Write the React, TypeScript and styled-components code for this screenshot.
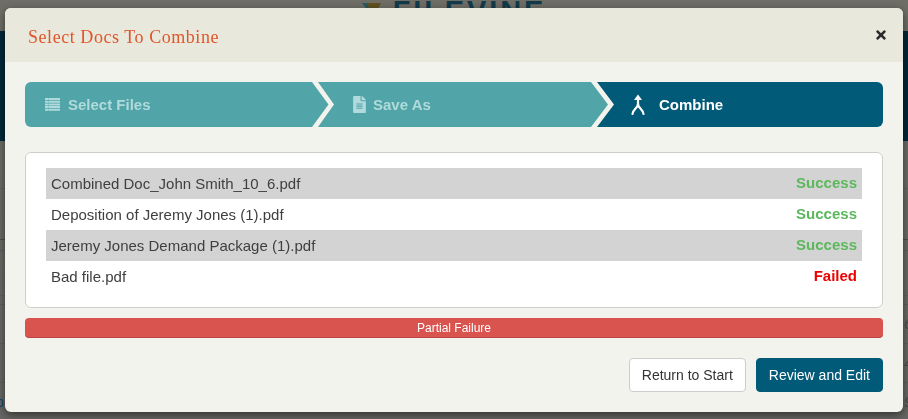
import React from "react";
import styled, { createGlobalStyle } from "styled-components";
import { FaFileAlt, FaTimes } from "react-icons/fa";

const GlobalStyle = createGlobalStyle`
  html, body {
    margin: 0;
    height: 100%;
    overflow: hidden;
    font-family: "Liberation Sans", Arial, sans-serif;
  }
`;

/* dimmed page behind the dialog */
const Page = styled.div`
  height: 419px;
  overflow: hidden;
  background: linear-gradient(#6e6e68, #666664);
`;

const TopBar = styled.div`
  height: 31px;
  overflow: hidden;
  display: flex;
  justify-content: center;
  gap: 12px;
  background: #6e6e67;
`;

const LogoMark = styled.svg`
  width: 19px;
  height: 20px;
  margin-top: 3px;
`;

const LogoText = styled.span`
  font-size: 29px;
  line-height: 29px;
  margin-top: -3px;
  font-weight: 700;
  letter-spacing: 2.9px;
  color: #123a4b;
`;

const Band = styled.div`
  height: 110px;
  background: #00283a;
`;

const BackRow = styled.div<{ $height: number; $line?: string }>`
  height: ${p => p.$height}px;
  box-sizing: border-box;
  border-bottom: 1px solid ${p => p.$line || "#5e5e5b"};
  display: flex;
  justify-content: space-between;
  align-items: center;
  font-size: 14px;
`;

const BackLeft = styled.span`
  color: #0d4a6c;
  margin-left: -4px;
`;

const BackRight = styled.span`
  color: #4a4a48;
  font-style: italic;
  margin-right: -4px;
`;

const Dialog = styled.div`
  position: fixed;
  left: 5px;
  top: 8px;
  width: 898px;
  height: 404px;
  box-sizing: border-box;
  background: #f2f3ed;
  border-radius: 6px;
  overflow: hidden;
  box-shadow: 0 3px 9px rgba(0, 0, 0, 0.5);
`;

const DialogHeader = styled.div`
  height: 54px;
  box-sizing: border-box;
  padding: 0 15px 0 23px;
  display: flex;
  align-items: center;
  justify-content: space-between;
  background: #e9e8dc;
`;

const Title = styled.h4`
  margin: 5px 0 0;
  font-family: "Liberation Serif", serif;
  font-weight: 400;
  font-size: 18px;
  letter-spacing: 0.55px;
  color: #e0562b;
`;

const Close = styled.button`
  border: 0;
  padding: 0;
  margin-top: -1px;
  background: none;
  display: flex;
  color: #2b2b2b;
  font-size: 14px;
`;

const DialogBody = styled.div`
  padding: 20px 20px 20px;
`;

const Steps = styled.div`
  display: flex;
  height: 45px;
  margin-bottom: 25px;
`;

const Step = styled.div<{ $width: number; $pad: number; $shape: string; $active?: boolean }>`
  width: ${p => p.$width}px;
  flex: none;
  box-sizing: border-box;
  padding-left: ${p => p.$pad}px;
  display: flex;
  align-items: center;
  font-size: 15px;
  font-weight: 700;
  background: ${p => (p.$active ? "#015a78" : "#51a4a7")};
  color: ${p => (p.$active ? "#fff" : "#b0dadb")};
  clip-path: ${p => p.$shape};
  & + & {
    margin-left: -11px;
  }
  svg {
    flex: none;
  }
`;

const StepLabel = styled.span<{ $gap: number }>`
  margin-left: ${p => p.$gap}px;
`;

const Results = styled.div`
  box-sizing: border-box;
  height: 156px;
  padding: 15px 20px;
  background: #fff;
  border: 1px solid #cfcfca;
  border-radius: 6px;
`;

const ResultRow = styled.div`
  height: 31px;
  padding: 0 5px;
  display: flex;
  align-items: center;
  justify-content: space-between;
  font-size: 15px;
  color: #3f3f3f;
  &:nth-child(odd) {
    background: #d3d3d3;
  }
`;

const Status = styled.span<{ $failed?: boolean }>`
  font-weight: 700;
  margin-top: -2px;
  color: ${p => (p.$failed ? "#f00000" : "#5cb85c")};
`;

const Progress = styled.div`
  height: 20px;
  margin-top: 10px;
  border-radius: 4px;
  background: #d9534f;
  box-shadow: inset 0 -1px 0 rgba(0, 0, 0, 0.15);
  color: #fff;
  font-size: 12px;
  line-height: 20px;
  text-align: center;
`;

const Footer = styled.div`
  display: flex;
  justify-content: flex-end;
  gap: 10px;
  margin-top: 20px;
`;

const Button = styled.button<{ $primary?: boolean }>`
  height: 34px;
  padding: 0 12px;
  font-family: inherit;
  font-size: 14px;
  border-radius: 4px;
  border: 1px solid ${p => (p.$primary ? "#015a78" : "#ccc")};
  background: ${p => (p.$primary ? "#015a78" : "#fff")};
  color: ${p => (p.$primary ? "#fff" : "#333")};
`;

const files = [
  { name: "Combined Doc_John Smith_10_6.pdf", status: "Success" },
  { name: "Deposition of Jeremy Jones (1).pdf", status: "Success" },
  { name: "Jeremy Jones Demand Package (1).pdf", status: "Success" },
  { name: "Bad file.pdf", status: "Failed" }
];

const backRows = [
  { height: 48, line: "#626260" },
  { height: 51, line: "#4f4f4c" },
  { height: 11 },
  { height: 45, line: "#626260" },
  { height: 9, left: "", right: "" },
  { height: 39, left: "f", right: "6" },
  { height: 39, left: "f", right: "4" },
  { height: 39, left: "p", right: "9" }
];

const ListIcon = () => (
  <svg width="15" height="13" viewBox="0 0 15 13" fill="currentColor">
    <path d="M0 0h15v2H0zM0 2.7h15v2H0zM0 5.4h15v2H0zM0 8.1h15v2H0zM0 10.8h15v2H0z" />
    <path d="M3.2 0h.6v13h-.6z" fill="#51a4a7" opacity="0.5" />
  </svg>
);

const MergeIcon = () => (
  <svg width="14" height="22" viewBox="0 0 14 22" fill="none" stroke="#fff" strokeWidth="2.2">
    <path d="M7 3v8" />
    <path d="M7 0.5 L3 6 H11 Z" fill="#fff" stroke="none" />
    <path d="M7 10c0 4-5 5-5.5 10" strokeLinecap="round" />
    <path d="M7 10c0 4 5 5 5.5 10" strokeLinecap="round" />
  </svg>
);

export default function App() {
  return (
    <>
      <GlobalStyle />
      <Page>
        <TopBar>
          <LogoMark viewBox="0 0 19 20">
            <path d="M0 0h6l4 14z" fill="#2c5a5c" />
            <path d="M5 0h14l-8 16z" fill="#5f5120" />
          </LogoMark>
          <LogoText>FILEVINE</LogoText>
        </TopBar>
        <Band />
        {backRows.map((row, i) => (
          <BackRow key={i} $height={row.height} $line={row.line}>
            <BackLeft>{row.left}</BackLeft>
            <BackRight>{row.right}</BackRight>
          </BackRow>
        ))}
      </Page>
      <Dialog>
        <DialogHeader>
          <Title>Select Docs To Combine</Title>
          <Close aria-label="Close">
            <FaTimes />
          </Close>
        </DialogHeader>
        <DialogBody>
          <Steps>
            <Step
              $width={304}
              $pad={20}
              $shape="polygon(0 0, 287px 0, 303.5px 50%, 287px 100%, 0 100%)"
              style={{ borderRadius: "6px 0 0 6px" }}
            >
              <ListIcon />
              <StepLabel $gap={8}>Select Files</StepLabel>
            </Step>
            <Step
              $width={290}
              $pad={33}
              $shape="polygon(0 0, 273px 0, 290px 50%, 273px 100%, 0 100%, 16px 50%)"
            >
              <FaFileAlt size={17} />
              <StepLabel $gap={5}>Save As</StepLabel>
            </Step>
            <Step
              $width={286}
              $pad={34}
              $active
              $shape="polygon(0 0, 100% 0, 100% 100%, 0 100%, 17px 50%)"
              style={{ borderRadius: "0 6px 6px 0" }}
            >
              <MergeIcon />
              <StepLabel $gap={14}>Combine</StepLabel>
            </Step>
          </Steps>
          <Results>
            {files.map(file => (
              <ResultRow key={file.name}>
                <span>{file.name}</span>
                <Status $failed={file.status === "Failed"}>{file.status}</Status>
              </ResultRow>
            ))}
          </Results>
          <Progress>Partial Failure</Progress>
          <Footer>
            <Button>Return to Start</Button>
            <Button $primary>Review and Edit</Button>
          </Footer>
        </DialogBody>
      </Dialog>
    </>
  );
}
